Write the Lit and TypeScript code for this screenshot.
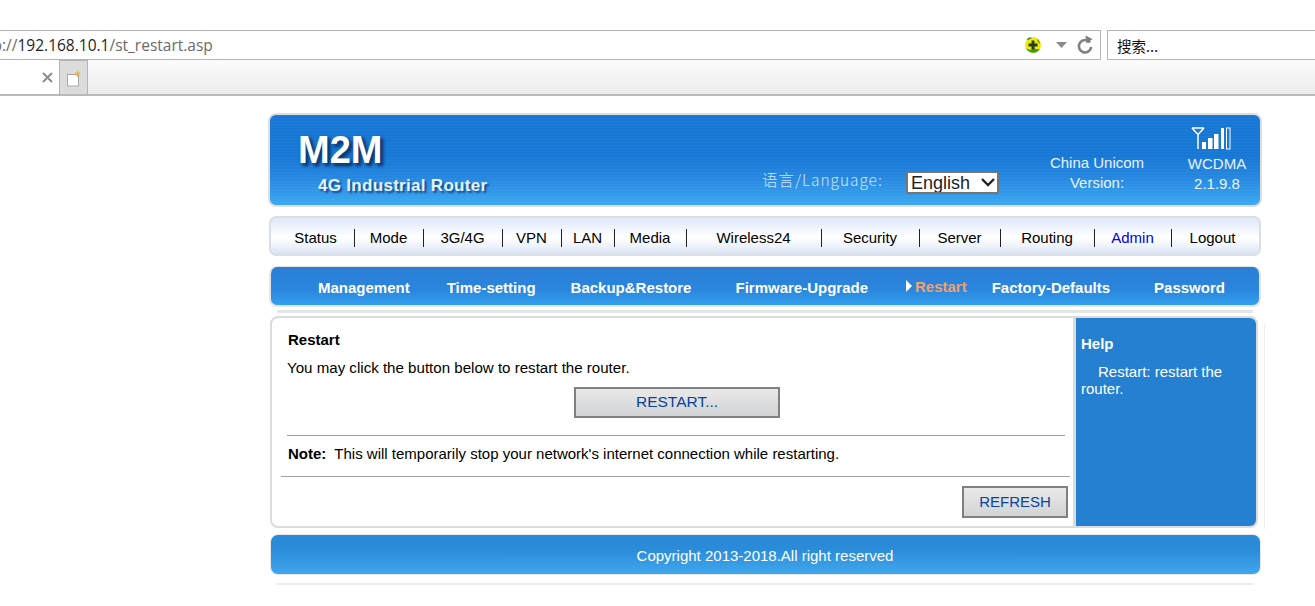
import { LitElement, html, css } from "lit";
import { customElement } from "lit/decorators.js";

const NAV: [string, number, boolean?][] = [
  ["Status", 77], ["Mode", 69], ["3G/4G", 79], ["VPN", 59], ["LAN", 53], ["Media", 72],
  ["Wireless24", 135], ["Security", 98], ["Server", 81], ["Routing", 94], ["Admin", 77, true], ["Logout", 0],
];
const SUB: [string, number, boolean?][] = [
  ["Management", 47], ["Time-setting", 37], ["Backup&Restore", 35], ["Firmware-Upgrade", 44],
  ["Restart", 47, true], ["Factory-Defaults", 25], ["Password", 44],
];

@customElement("app-root")
export class AppRoot extends LitElement {
  static styles = css`
    :host { display: block; width: 1315px; height: 606px; overflow: hidden; background: #fff; font-family: "Liberation Sans", Arial, sans-serif; color: #000; }
    .chrome-top { height: 30px; }
    .addr-row { display: flex; height: 30px; gap: 6px; }
    .addr { width: 1101px; box-sizing: border-box; border: 1px solid #b4b4b4; border-left: 0; display: flex; align-items: center; overflow: hidden; font-family: "Open Sans", sans-serif; font-size: 15.5px; color: #6b6b6b; }
    .url { margin-left: -28px; flex: 1; white-space: nowrap; }
    .url b { font-weight: 400; color: #1f1f1f; }
    .addr svg { display: block; flex: none; }
    .ball { margin-right: 14px; }
    .tri { margin-right: 9px; }
    .reload { margin-right: 6px; }
    .search { flex: 1; box-sizing: border-box; border: 1px solid #b4b4b4; border-right: 0; font-family: "Noto Sans CJK SC", sans-serif; font-size: 14.5px; color: #111; display: flex; align-items: center; padding-left: 9px; }
    .tabs { height: 36px; box-sizing: border-box; display: flex; background: linear-gradient(#fbfbfb, #ececec); border-bottom: 2px solid #b9b9b9; }
    .tab { width: 59px; height: 34px; background: #fff; display: flex; align-items: center; justify-content: flex-end; padding-right: 6px; box-sizing: border-box; }
    .newtab { width: 29px; height: 34px; box-sizing: border-box; background: #dcdcdc; border: 1px solid #b4b4b4; border-width: 1px 1px 0 1px; display: flex; align-items: center; justify-content: center; padding-top: 2px; }

    .page { width: 994px; margin: 17px 0 0 268px; position: relative; }
    .frame { border: 2px solid #dedede; border-radius: 8px; box-sizing: border-box; }
    .head { height: 94px; margin-bottom: 9px; display: flex; background:
      repeating-linear-gradient(rgba(255,255,255,.03) 0 1px, transparent 1px 3px),
      linear-gradient(#1877d6 0, #1777d5 45%, #2688e0 70%, #3ca9f1 100%);
      color: #fff; align-items: flex-start; }
    .brand { width: 470px; flex: none; }
    .m2m { font-weight: 700; font-size: 38px; line-height: 44px; margin: 13px 0 0 28px; text-shadow: 3px 3px 3px #0c3c78, 2px 2px 4px #0c3c78; }
    .tagline { font-weight: 700; font-size: 17px; line-height: 20px; margin: 4px 0 0 48px; letter-spacing: 0.3px; color: #e6f2fc; text-shadow: 2px 2px 2px #0f4a8e; }
    .lang { display: flex; align-items: center; margin-top: 54px; width: 283px; flex: none; margin-left: 23px; }
    .lang-label { font-family: "Noto Sans CJK SC", "DejaVu Sans", sans-serif; font-weight: 300; font-size: 15.5px; letter-spacing: 0.95px; color: #cfe5fa; width: 143px; flex: none; line-height: 24px; margin: -5px 0 0 -1px; }
    select { appearance: none; -webkit-appearance: none; width: 93px; height: 23px; font-family: "Liberation Sans", sans-serif; font-size: 18px; color: #222; border: 2px solid #767676; border-radius: 0; padding: 0 0 0 3px; margin: 2px 0 0 1px; outline: none;
      background: #fff url("data:image/svg+xml,%3Csvg xmlns='http://www.w3.org/2000/svg' width='14' height='9'%3E%3Cpath d='M1 1l6 6 6-6' fill='none' stroke='%23222' stroke-width='2.400'/%3E%3C/svg%3E") no-repeat right 2px center; }
    .st { flex: none; text-align: center; font-size: 15px; line-height: 20px; color: #e8f3fd; }
    .st1 { width: 112px; margin: 38px 0 0 -5px; }
    .st2 { width: 80px; margin: 12px 0 0 24px; }
    .st2 svg { display: block; margin: 0 0 4px 14px; }

    .nav { height: 40px; margin: 0 1px 10px 1px; display: flex; align-items: center; border-radius: 7px; box-sizing: border-box; padding: 3px 0 0 7px; background: linear-gradient(#dfe9f8, #fff 55%, #eef3fb 78%, #d8e3f3); border: 2px solid #dadfe6; font-size: 15px; }
    .nav span { text-align: center; display: block; height: 18px; line-height: 18px; border-right: 1px solid #222; box-sizing: border-box; flex: none; padding-right: 1px; }
    .nav span:last-child { border-right: 0; flex: 1; padding-right: 6px; }
    .nav .on { color: #0000e6; }
    .sub { height: 41px; margin: 0 1px; border-radius: 8px; box-sizing: border-box; display: flex; align-items: center; background: linear-gradient(#2b7ed6, #2a86dd 60%, #33a0ee); border: 2px solid #e4e4e4; border-top-width: 1px; font-size: 15px; font-weight: 700; color: #fff; padding-top: 2px; }
    .sub span { flex: none; white-space: nowrap; position: relative; }
    .sub .on { color: #f3a06c; margin-top: -2px; }
    .sub .on::before { content: ""; position: absolute; left: -9px; top: 2px; border-left: 6px solid #fff; border-top: 6px solid transparent; border-bottom: 6px solid transparent; }
    .band { height: 3px; margin: 3px 9px 3px 9px; background: #e6e6e6; }
    .main { height: 212px; margin: 1px 4px 0 2px; border: 2px solid #dcdcdc; border-radius: 8px; box-sizing: border-box; display: flex; position: relative; background: #fff; }
    .left { width: 804px; flex: none; box-sizing: border-box; font-size: 15px; padding-top: 13px; border-right: 3px solid #dcdcdc; }
    .h { font-weight: 700; font-size: 15px; line-height: 18px; margin-left: 16px; }
    .p { line-height: 18px; margin: 10px 0 0 15px; font-size: 15.1px; }
    .btn { display: block; box-sizing: border-box; font-family: "Liberation Sans", sans-serif; font-size: 15px; color: #0b429e; border: 2px solid #808080; background: linear-gradient(#e9e9e9, #d2d3d5); padding: 0 0 2px; }
    .btn1 { width: 206px; height: 31px; margin: 10px 0 0 302px; font-size: 15.5px; }
    .hr1 { height: 1px; background: #9c9c9c; margin: 17px 8px 0 15px; }
    .note { line-height: 18px; margin: 9px 0 0 16px; font-size: 15px; }
    .note b { margin-right: 8px; }
    .hr2 { height: 1px; background: #a2a2a2; margin: 13px 3px 0 9px; }
    .btn2 { width: 106px; height: 32px; margin: 9px 5px 0 auto; }
    .help { flex: 1; background: #2580d2; color: #fff; border-radius: 0 6px 6px 0; font-size: 15px; line-height: 17px; padding: 17px 16px 0 5px; }
    .help h4 { margin: 0 0 10px; font-size: 15px; line-height: 18px; }
    .help p { margin: 0; text-indent: 17px; }
    .foot { height: 41px; margin: 6px 1px 0 2px; border-radius: 8px; box-sizing: border-box; border: 1px solid #e6e6e6; background: linear-gradient(#2a8ad8, #2a8bd9 35%, #3fa7ec); color: #fff; font-size: 15px; display: flex; align-items: center; justify-content: center; padding: 2px 1px 0 0; }
    .line { height: 2px; margin: 8px 9px 0 9px; background: #ececec; }
    .edge { position: absolute; right: -3px; top: 211px; width: 1px; height: 205px; background: #eeeeee; }
  `;

  render() {
    return html`
      <div class="chrome-top"></div>
      <div class="addr-row">
        <div class="addr">
          <span class="url">http://<b>192.168.10.1</b>/st_restart.asp</span>
          <svg class="ball" width="18" height="18" viewBox="0 0 18 18">
            <circle cx="9" cy="9" r="8" fill="#f2e80f"/>
            <path d="M2 12a8 8 0 0 0 14 1c-3 1-5-1-7 0s-5 1-7-1zM3 4c2 0 3-1 5-2-3-1-5 0-5 2zM13 3c2 1 3 3 3 5-1-1-3-3-3-5z" fill="#3f9b2a"/>
            <path d="M7.500 4.500h3v3h3v3h-3v3h-3v-3h-3v-3h3z" fill="#23401a"/>
          </svg>
          <svg class="tri" width="11" height="6" viewBox="0 0 11 6"><path d="M0 0h11L5.500 6z" fill="#8a8a8a"/></svg>
          <svg class="reload" width="18" height="20" viewBox="0 0 18 20">
            <path d="M14 7.500A6.200 6.200 0 1 0 15.200 12" fill="none" stroke="#7c8085" stroke-width="2.600"/>
            <path d="M9.500 0.500 16.500 4 10.500 8.500z" fill="#7c8085"/>
          </svg>
        </div>
        <div class="search">搜索...</div>
      </div>
      <div class="tabs">
        <div class="tab">
          <svg width="11" height="11" viewBox="0 0 11 11"><path d="M1 1l9 9M10 1l-9 9" stroke="#8c8c8c" stroke-width="2"/></svg>
        </div>
        <div class="newtab">
          <svg width="16" height="17" viewBox="0 0 16 17">
            <rect x="1.500" y="4.500" width="11" height="11.500" fill="#fff" stroke="#a8a8a8"/>
            <path d="M11.500 1v6M8.500 4h6M9.500 2l4 4M13.500 2l-4 4" stroke="#f0b820" stroke-width="1"/>
          </svg>
        </div>
      </div>
      <div class="page">
        <div class="frame head">
          <div class="brand">
            <div class="m2m">M2M</div>
            <div class="tagline">4G Industrial Router</div>
          </div>
          <div class="lang">
            <span class="lang-label">语言/Language:</span>
            <select><option>English</option></select>
          </div>
          <div class="st st1">China Unicom<br />Version:</div>
          <div class="st st2">
            <svg width="42" height="23" viewBox="0 0 42 23" fill="#fff">
              <path d="M1 1h12M1 1l5.500 6M13 1L7.500 7M7 6v16" stroke="#fff" stroke-width="1.500" fill="none"/>
              <rect x="11" y="15" width="4" height="7"/>
              <rect x="17" y="11" width="4.500" height="11"/>
              <rect x="23" y="7" width="4.500" height="15"/>
              <rect x="30" y="1" width="3" height="21"/>
              <rect x="35.500" y="1" width="3.500" height="21" fill="none" stroke="#fff"/>
            </svg>
            WCDMA<br />2.1.9.8
          </div>
        </div>
        <div class="nav">
          ${NAV.map(([t, w, on]) => html`<span class=${on ? "on" : ""} style=${w ? `width:${w}px` : ""}>${t}</span>`)}
        </div>
        <div class="sub">
          ${SUB.map(([t, m, on]) => html`<span class=${on ? "on" : ""} style="margin-left:${m}px">${t}</span>`)}
        </div>
        <div class="band"></div>
        <div class="main">
          <div class="left">
            <div class="h">Restart</div>
            <div class="p">You may click the button below to restart the router.</div>
            <button class="btn btn1">RESTART...</button>
            <div class="hr1"></div>
            <div class="note"><b>Note:</b>This will temporarily stop your network's internet connection while restarting.</div>
            <div class="hr2"></div>
            <button class="btn btn2">REFRESH</button>
          </div>
          <div class="help">
            <h4>Help</h4>
            <p>Restart: restart the router.</p>
          </div>
        </div>
        <div class="foot">Copyright 2013-2018.All right reserved</div>
        <div class="line"></div>
        <div class="edge"></div>
      </div>
    `;
  }
}
